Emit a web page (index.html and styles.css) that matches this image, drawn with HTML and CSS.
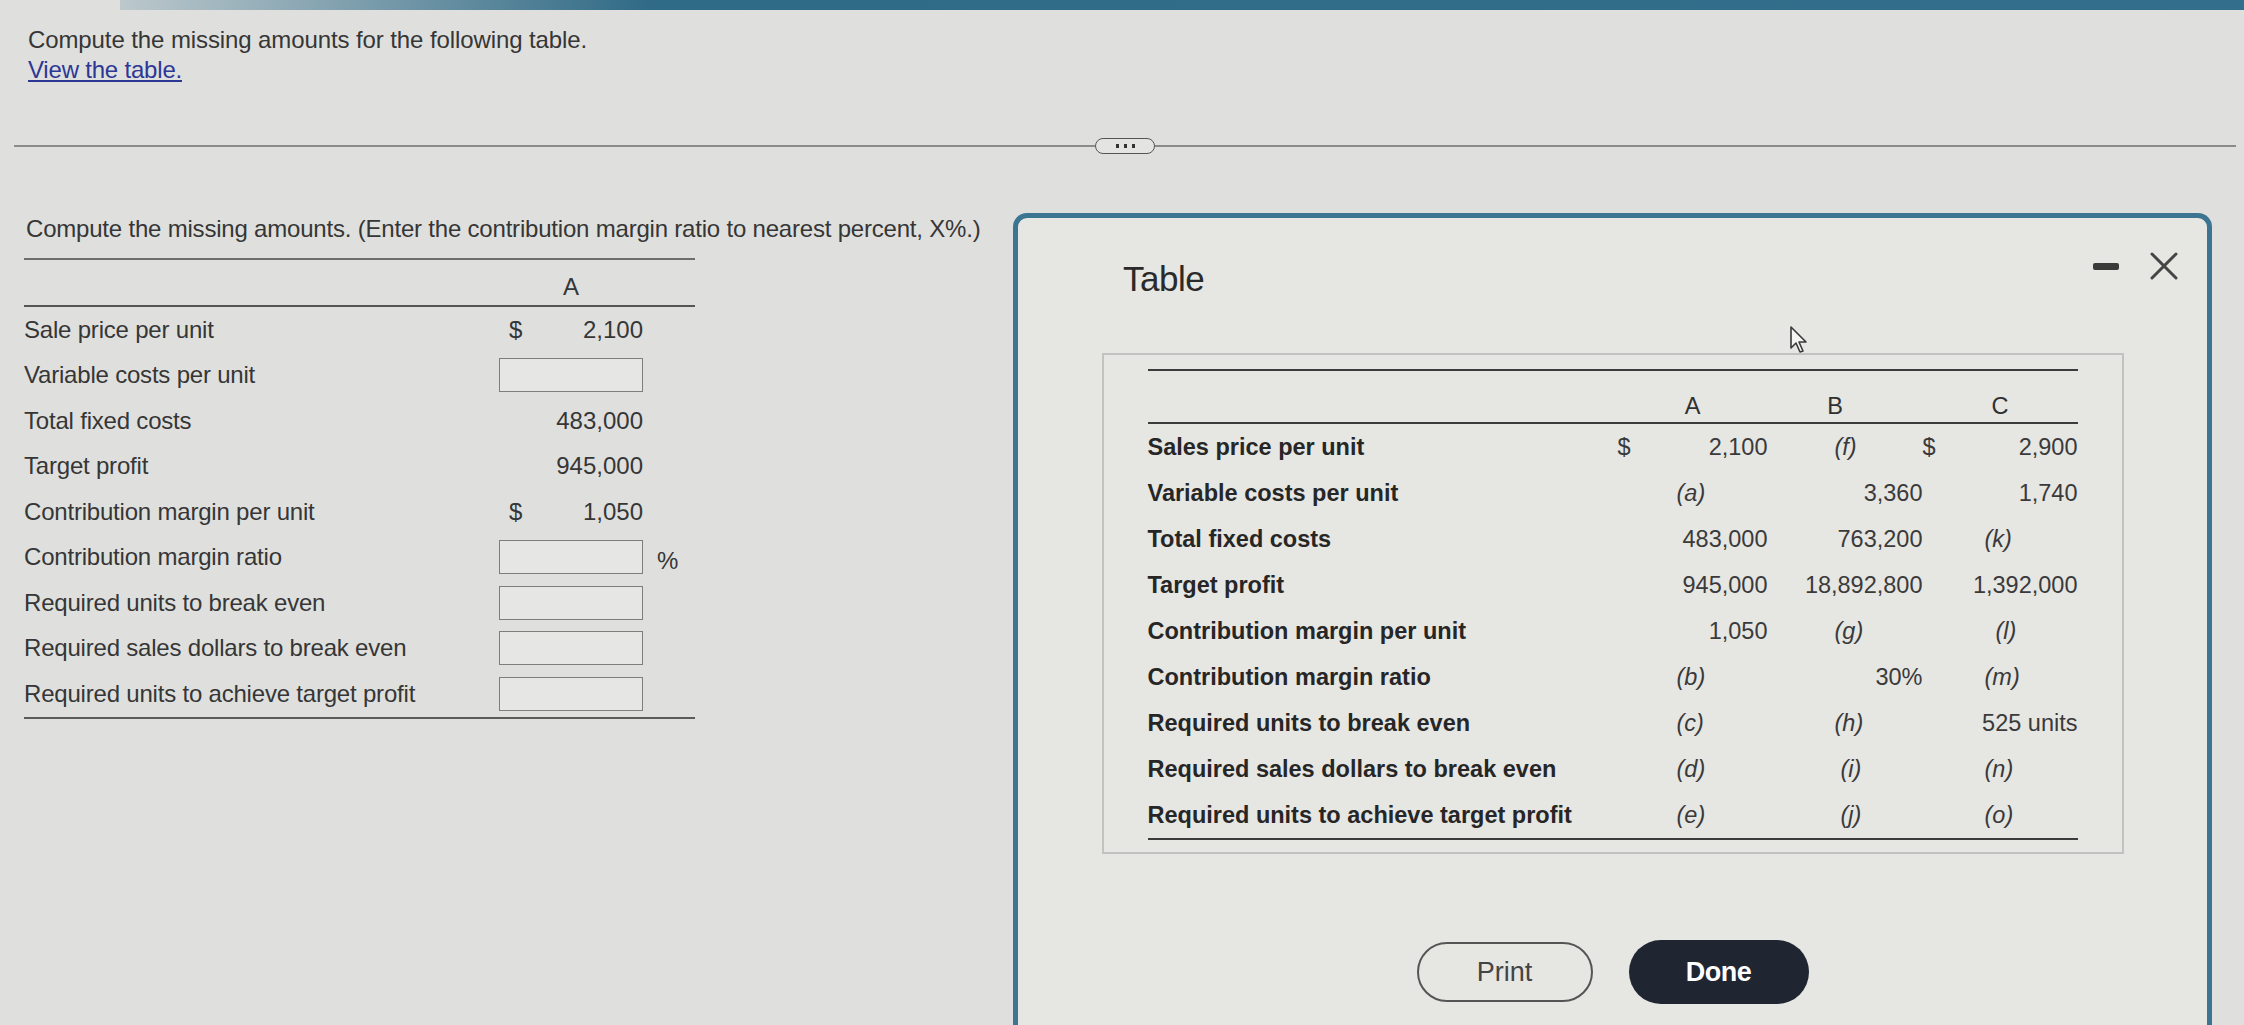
FILE: index.html
```html
<!DOCTYPE html>
<html lang="en">
<head>
<meta charset="utf-8">
<title>Compute the missing amounts</title>
<link rel="stylesheet" href="styles.css">
</head>
<body>
<div class="topbar"></div>
<main class="page">
  <p class="question">Compute the missing amounts for the following table.</p>
  <a class="link" href="#">View the table.</a>

  <div class="divider">
    <span class="rule"></span>
    <span class="pill"><i></i><i></i><i></i></span>
    <span class="rule"></span>
  </div>

  <p class="instruction">Compute the missing amounts. (Enter the contribution margin ratio to nearest percent, X%.)</p>

  <div class="ltable">
    <div class="lhead"><span></span><span class="lcol">A</span><span></span></div>
    <div class="lrow"><span class="lab">Sale price per unit</span><span class="lval"><b>$</b><em>2,100</em></span><span></span></div>
    <div class="lrow"><span class="lab">Variable costs per unit</span><span class="box"></span><span></span></div>
    <div class="lrow"><span class="lab">Total fixed costs</span><span class="lval"><b></b><em>483,000</em></span><span></span></div>
    <div class="lrow"><span class="lab">Target profit</span><span class="lval"><b></b><em>945,000</em></span><span></span></div>
    <div class="lrow"><span class="lab">Contribution margin per unit</span><span class="lval"><b>$</b><em>1,050</em></span><span></span></div>
    <div class="lrow"><span class="lab">Contribution margin ratio</span><span class="box"></span><span class="pct">%</span></div>
    <div class="lrow"><span class="lab">Required units to break even</span><span class="box"></span><span></span></div>
    <div class="lrow"><span class="lab">Required sales dollars to break even</span><span class="box"></span><span></span></div>
    <div class="lrow"><span class="lab">Required units to achieve target profit</span><span class="box"></span><span></span></div>
  </div>
</main>

<section class="modal">
  <div class="mhead">
    <h2 class="mtitle">Table</h2>
    <div class="controls">
      <span class="minus"></span>
      <svg class="close" width="30" height="30" viewBox="0 0 30 30"><path d="M3 3 L27 27 M27 3 L3 27" stroke="#454545" stroke-width="3" fill="none" stroke-linecap="round"/></svg>
    </div>
  </div>

  <div class="tbox">
    <div class="tgrid thead">
      <span></span><span class="hA">A</span><span class="hB">B</span><span class="hC">C</span>
    </div>
    <div class="tbody">
      <div class="tgrid trow"><span class="tl">Sales price per unit</span><span>$</span><span class="num">2,100</span><span class="lb">(f)</span><span>$</span><span class="num">2,900</span></div>
      <div class="tgrid trow"><span class="tl">Variable costs per unit</span><span></span><span class="la">(a)</span><span class="num">3,360</span><span></span><span class="num">1,740</span></div>
      <div class="tgrid trow"><span class="tl">Total fixed costs</span><span></span><span class="num">483,000</span><span class="num">763,200</span><span></span><span class="lc">(k)</span></div>
      <div class="tgrid trow"><span class="tl">Target profit</span><span></span><span class="num">945,000</span><span class="num">18,892,800</span><span></span><span class="num">1,392,000</span></div>
      <div class="tgrid trow"><span class="tl">Contribution margin per unit</span><span></span><span class="num">1,050</span><span class="lb">(g)</span><span></span><span class="lc lc2">(l)</span></div>
      <div class="tgrid trow"><span class="tl">Contribution margin ratio</span><span></span><span class="la">(b)</span><span class="num">30%</span><span></span><span class="lc">(m)</span></div>
      <div class="tgrid trow"><span class="tl">Required units to break even</span><span></span><span class="la">(c)</span><span class="lb">(h)</span><span></span><span class="num">525 units</span></div>
      <div class="tgrid trow"><span class="tl">Required sales dollars to break even</span><span></span><span class="la">(d)</span><span class="lb lb2">(i)</span><span></span><span class="lc">(n)</span></div>
      <div class="tgrid trow"><span class="tl">Required units to achieve target profit</span><span></span><span class="la">(e)</span><span class="lb lb2">(j)</span><span></span><span class="lc">(o)</span></div>
    </div>
  </div>

  <div class="buttons">
    <button class="btn print">Print</button>
    <button class="btn done">Done</button>
  </div>

  <svg class="cursor" width="22" height="30" viewBox="0 0 22 30"><path d="M2 2 L2 23 L7 18 L11 27 L14 26 L10 17 L17 17 Z" fill="#f4f4f2" stroke="#3a3a3a" stroke-width="1.6" stroke-linejoin="round"/></svg>
</section>
</body>
</html>
```

FILE: styles.css
```css
html, body {
  margin: 0;
  padding: 0;
}
body {
  width: 2244px;
  height: 1025px;
  overflow: hidden;
  position: relative;
  background: #dfe0de;
  font-family: "Liberation Sans", Arial, sans-serif;
  color: #363636;
}
.topbar {
  height: 10px;
  margin-left: 120px;
  background: linear-gradient(to right, rgba(47,104,132,0.2), #2f6a86 25%, #336f8c);
}
.page {
  padding-left: 28px;
}
.question {
  margin: 16px 0 0 0;
  font-size: 24px;
  line-height: 28px;
  letter-spacing: -0.1px;
}
.link {
  display: inline-block;
  margin-top: 2px;
  font-size: 24px;
  line-height: 28px;
  color: #2d3796;
  text-decoration: underline;
  letter-spacing: -0.2px;
}
.divider {
  display: flex;
  align-items: center;
  height: 16px;
  margin: 54px 8px 0 -14px;
}
.rule {
  flex: 1;
  height: 2px;
  background: #8a8b8a;
}
.pill {
  width: 58px;
  height: 14px;
  border: 1.5px solid #555;
  border-radius: 8px;
  display: flex;
  align-items: center;
  justify-content: center;
  gap: 5px;
  background: #e4e5e3;
}
.pill i {
  width: 3px;
  height: 4px;
  background: #333;
}
.instruction {
  margin: 61px 0 0 -2px;
  font-size: 24px;
  line-height: 28px;
  letter-spacing: -0.2px;
}

/* left table */
.ltable {
  margin: 15px 0 0 -4px;
  width: 671px;
  border-top: 2px solid #6d6e6d;
  border-bottom: 2px solid #5a5b5a;
}
.lhead, .lrow {
  display: grid;
  grid-template-columns: 475px 144px 52px;
  align-items: center;
}
.lhead {
  height: 45px;
  border-bottom: 2px solid #555;
  align-items: end;
}
.lcol {
  text-align: center;
  font-size: 24px;
  line-height: 28px;
  padding-bottom: 4px;
}
.lrow {
  height: 45.5px;
  font-size: 24px;
}
.lab {
  white-space: nowrap;
  letter-spacing: -0.2px;
}
.lval {
  display: flex;
  justify-content: space-between;
  padding-left: 10px;
}
.lval b, .lval em {
  font-weight: normal;
  font-style: normal;
}
.box {
  height: 34px;
  box-sizing: border-box;
  border: 1.5px solid #7d7e7d;
  background: #e6e7e5;
}
.pct {
  padding-left: 14px;
  padding-top: 8px;
}

/* modal */
.modal {
  position: absolute;
  left: 1013px;
  top: 213px;
  width: 1199px;
  height: 812px;
  box-sizing: border-box;
  border: 5px solid #3b7591;
  border-bottom: none;
  border-radius: 14px 14px 0 0;
  background: #e6e6e3;
  display: flex;
  flex-direction: column;
  align-items: center;
  overflow: hidden;
}
.mhead {
  align-self: stretch;
  height: 122px;
  display: flex;
  align-items: center;
  justify-content: space-between;
  padding: 0 28px 0 105px;
}
.mtitle {
  margin: 0;
  font-size: 35px;
  font-weight: normal;
  color: #2a2a2a;
  letter-spacing: -0.5px;
}
.controls {
  display: flex;
  align-items: center;
  gap: 30px;
  margin-top: -26px;
}
.minus {
  width: 26px;
  height: 7px;
  border-radius: 2px;
  background: #3a3a3a;
}
.tbox {
  margin-top: 13px;
  width: 1022px;
  height: 501px;
  flex: none;
  box-sizing: border-box;
  border: 2px solid #c2c2c0;
  padding: 14px 44px 0 44px;
}
.tgrid {
  display: grid;
  grid-template-columns: 470px 45px 105px 155px 45px 110px;
  align-items: center;
  font-size: 23.5px;
}
.thead {
  border-top: 2px solid #3c3c3c;
  border-bottom: 2px solid #3c3c3c;
  height: 51px;
  box-sizing: content-box;
  align-items: end;
  color: #303030;
}
.thead span {
  padding-bottom: 2px;
  line-height: 28px;
}
.hA {
  grid-column: 2 / 4;
  text-align: center;
}
.hB {
  text-align: center;
  padding-right: 20px;
}
.hC {
  grid-column: 5 / 7;
  text-align: center;
}
.tbody {
  border-bottom: 2px solid #3c3c3c;
}
.trow {
  height: 46px;
  color: #3a3a3a;
}
.tl {
  font-weight: bold;
  color: #262626;
  white-space: nowrap;
}
.num {
  text-align: right;
}
.la {
  padding-left: 14px;
  font-style: italic;
}
.lb {
  padding-left: 67px;
  font-style: italic;
}
.lb2 {
  padding-left: 73px;
}
.lc {
  padding-left: 17px;
  font-style: italic;
}
.lc2 {
  padding-left: 28px;
}
.buttons {
  margin-top: 86px;
  display: flex;
  gap: 36px;
  align-items: center;
  flex: none;
}
.btn {
  width: 176px;
  height: 60px;
  border-radius: 30px;
  font-family: "Liberation Sans", Arial, sans-serif;
  font-size: 27px;
  box-sizing: border-box;
}
.print {
  background: transparent;
  border: 2.5px solid #555;
  color: #444;
}
.done {
  width: 180px;
  height: 64px;
  border-radius: 32px;
  background: #1f2631;
  border: none;
  color: #fff;
  font-weight: bold;
  letter-spacing: -0.5px;
}
.cursor {
  position: absolute;
  left: 771px;
  top: 107px;
}
```
